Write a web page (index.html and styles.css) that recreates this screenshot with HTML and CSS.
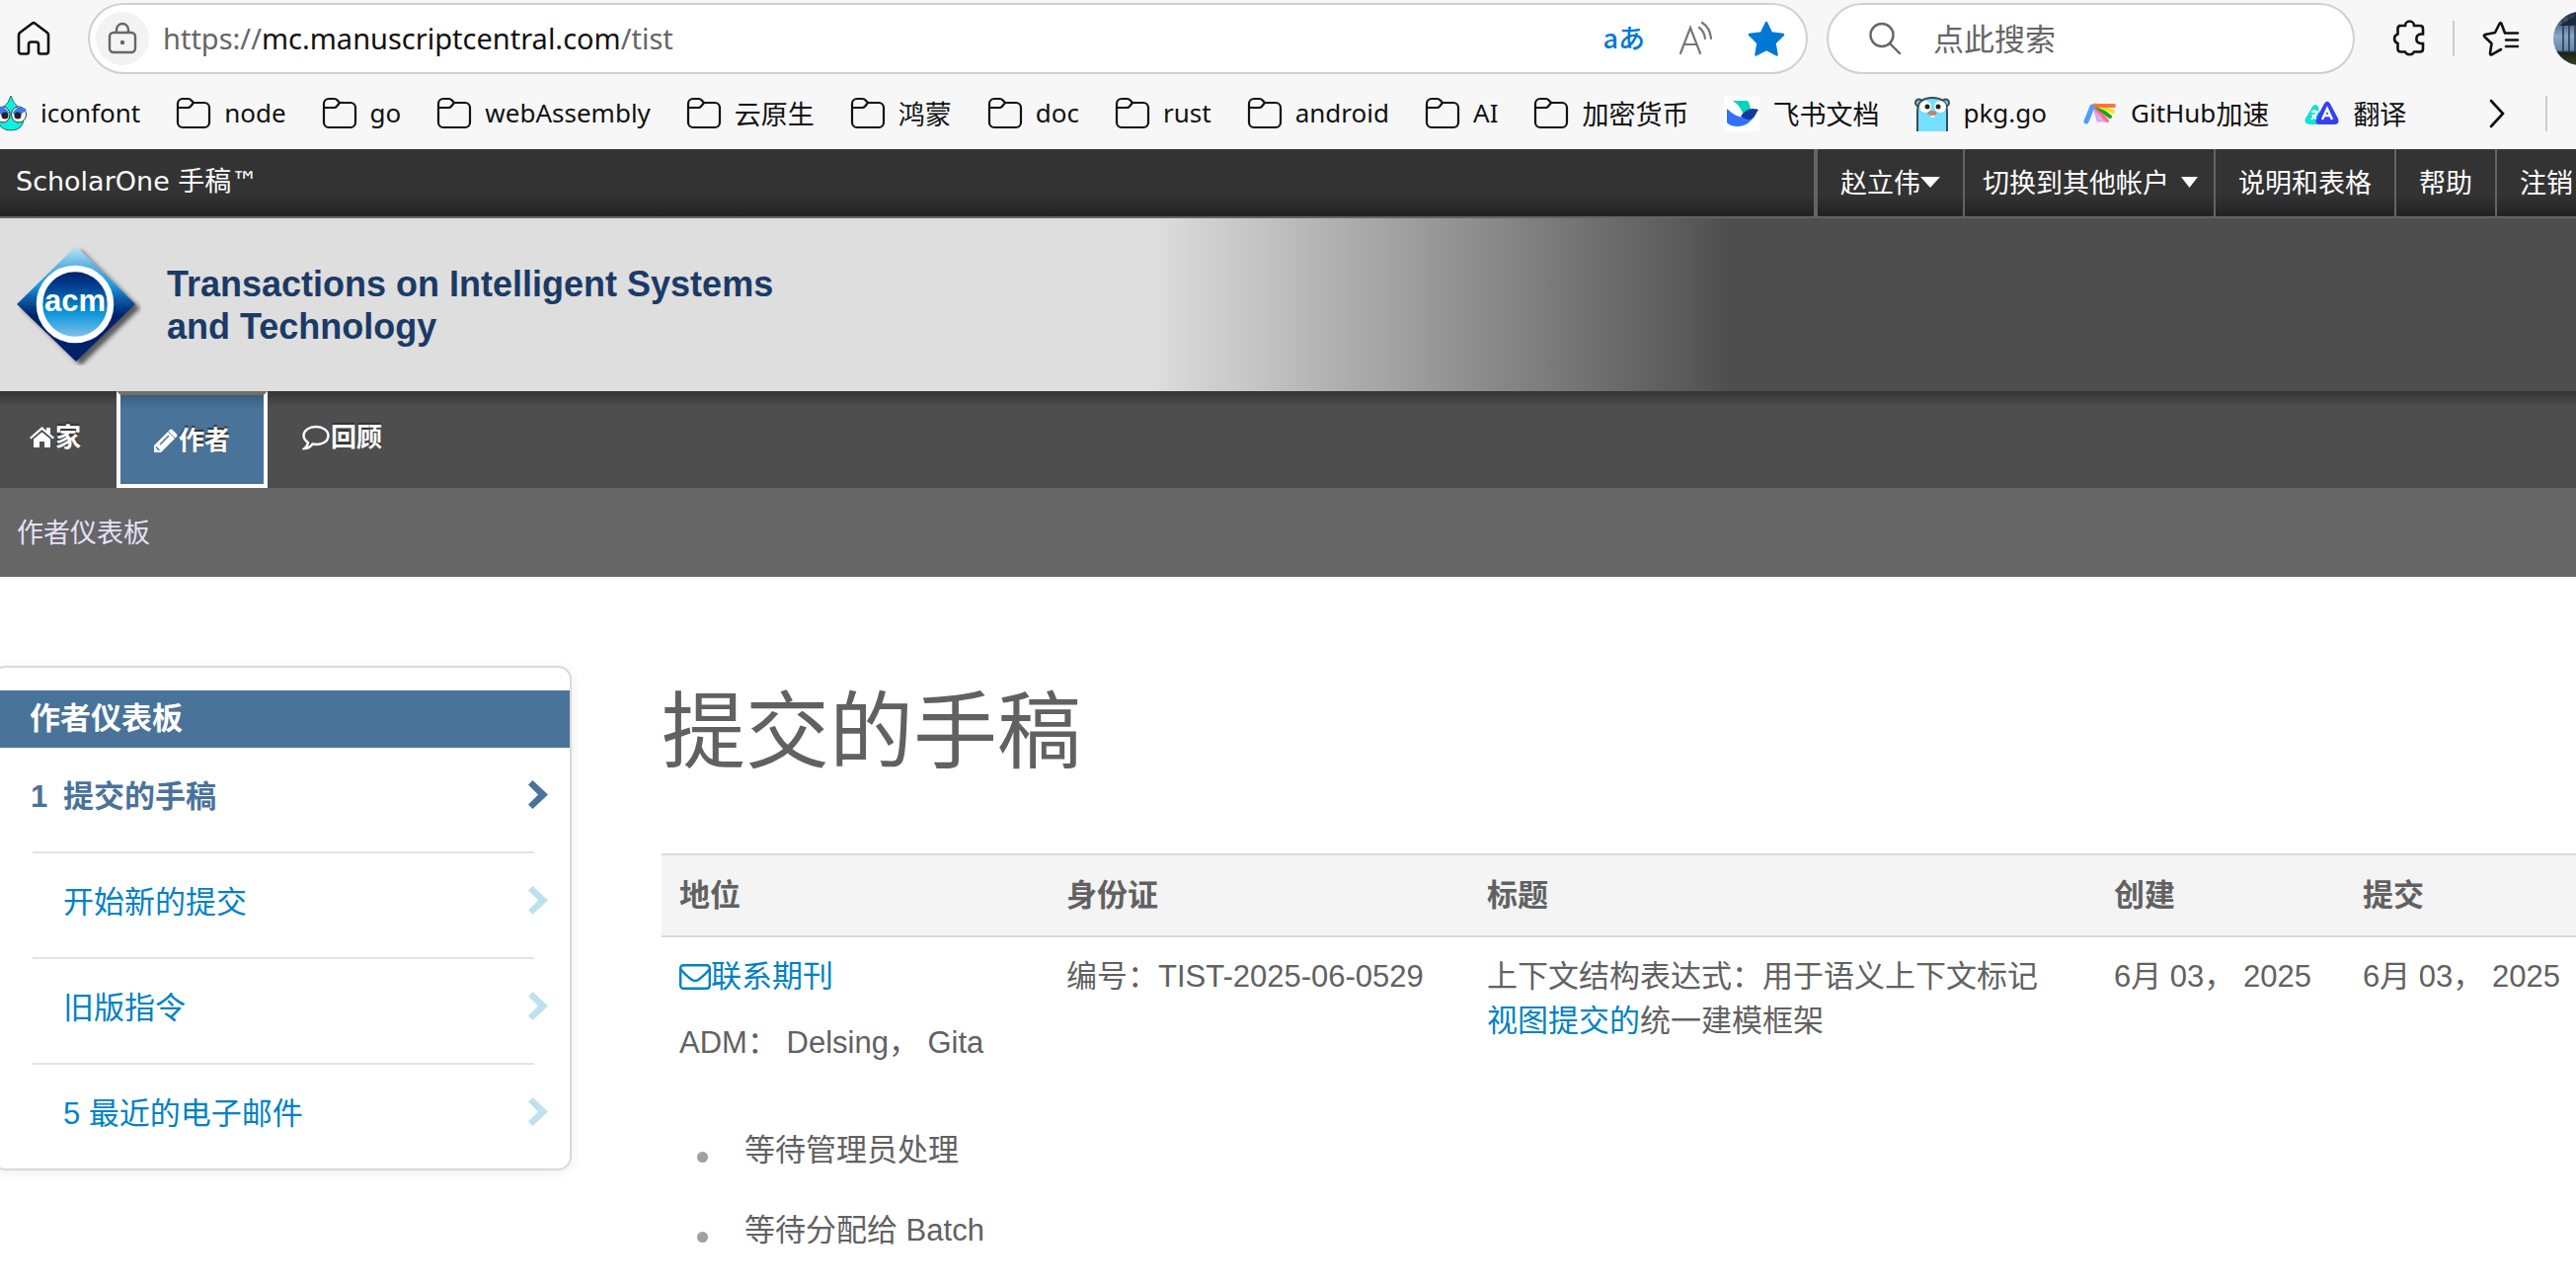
FILE: index.html
```html
<!DOCTYPE html>
<html lang="zh-CN">
<head>
<meta charset="utf-8">
<title>ScholarOne 手稿</title>
<link rel="stylesheet" href="styles.css">
</head>
<body>
<svg class="defs" aria-hidden="true">
  <symbol id="folder" viewBox="0 0 36 36">
    <path d="M2 8a5 5 0 0 1 5-5h5.500q2 0 3.200 1.500L18 7h11a5 5 0 0 1 5 5v15a5 5 0 0 1-5 5H7a5 5 0 0 1-5-5zM2 12h10.500q1.500 0 2.500-1.200L18 7" fill="none" stroke="#111" stroke-width="2.200"/>
  </symbol>
  <symbol id="chevron" viewBox="0 0 20 29">
    <path d="M0 4.500 4.500 0 20 14.500 4.500 29 0 24.500l10-10z" fill="currentColor"/>
  </symbol>
</svg>

<header class="browser">
  <div class="toolbar">
    <button class="icon-btn home" aria-label="主页">
      <svg width="34" height="36" viewBox="0 0 34 36"><path d="M2 14.500Q2 13 3.200 12L15.500 2.800q1.500-1.200 3 0L30.800 12Q32 13 32 14.500V31q0 2.500-2.500 2.500H24q-2 0-2-2V24q0-2.500-2.500-2.500h-5Q12 21.500 12 24v7.500q0 2-2 2H4.500Q2 33.500 2 31z" fill="none" stroke="#111" stroke-width="2.600"/></svg>
    </button>
    <div class="address">
      <span class="lock"><svg width="30" height="34" viewBox="0 0 30 34"><rect x="2" y="11" width="26" height="20" rx="4" fill="none" stroke="#666" stroke-width="2.400"/><path d="M9 11V8a6 6 0 0 1 12 0v3" fill="none" stroke="#666" stroke-width="2.400"/><circle cx="15" cy="21" r="2.200" fill="#666"/></svg></span>
      <span class="url">https://<b>mc.manuscriptcentral.com</b>/tist</span>
      <button class="icon-btn translate" aria-label="翻译页面">aあ</button>
      <button class="icon-btn" aria-label="大声朗读">
        <svg width="36" height="36" viewBox="0 0 36 36" fill="none" stroke="#777" stroke-width="2.200" stroke-linecap="round"><path d="M2 33 12 7l10 26M5.500 24h13M21 7q5 3.500 6 11M24 2q8 5 9 16"/></svg>
      </button>
      <button class="icon-btn" aria-label="收藏">
        <svg width="38" height="36" viewBox="0 0 38 36"><path d="M19 2l5 10.500 12 1.500-8.500 8.500 2 12L19 29 8.500 34.500l2-12L2 14l12-1.500z" fill="#0078d4" stroke="#0078d4" stroke-width="2.500" stroke-linejoin="round"/></svg>
      </button>
    </div>
    <label class="search">
      <svg width="34" height="34" viewBox="0 0 34 34" fill="none" stroke="#666" stroke-width="2.400"><circle cx="14" cy="13.500" r="11.500"/><path d="M22 22l10 10" stroke-linecap="round"/></svg>
      <input type="text" placeholder="点此搜索" aria-label="点此搜索">
    </label>
    <button class="icon-btn ext" aria-label="扩展">
      <svg width="34" height="38" viewBox="0 0 34 38"><path d="M7 6h7a4.500 4.500 0 0 1 9 0h6q3 0 3 3v5.500h-2.500a4.800 4.800 0 0 0 0 9.500H32v5.500q0 3-3 3h-6a5 5 0 0 1-9 0H9.500q-3 0-3-3V24a5 5 0 0 1 0-9.500V9q0-3 3-3z" fill="none" stroke="#111" stroke-width="2.600"/></svg>
    </button>
    <span class="rule"></span>
    <button class="icon-btn favs" aria-label="收藏夹">
      <svg width="38" height="38" viewBox="0 0 38 38" fill="none" stroke="#111" stroke-width="2.600" stroke-linecap="round" stroke-linejoin="round"><path d="M36 13.500H23L19.500 4q-1-1.800-2 0L13 13 3 15q-2 .800-.500 2.200L9.500 24 8 34q.200 2 2 1.200l9-5.200M24 20.500h12M24 27h12"/></svg>
    </button>
    <svg class="avatar" width="54" height="54" viewBox="0 0 54 54"><defs><clipPath id="face"><circle cx="27" cy="27" r="27"/></clipPath><linearGradient id="sky" x1="0" y1="0" x2="0" y2="1"><stop offset="0" stop-color="#1c2c3e"/><stop offset=".45" stop-color="#8aa6cc"/><stop offset=".72" stop-color="#6a86a8"/><stop offset=".76" stop-color="#16211b"/><stop offset="1" stop-color="#34481f"/></linearGradient></defs><g clip-path="url(#face)"><path d="M0 0h54v54H0z" fill="url(#sky)"/><path d="M10 8v32M16 4v36M22 0v42M30 0v42" stroke="#22354a" stroke-width="1.500"/><path d="M6 14 22 4l14 8-18 2z" fill="#1a2a38"/></g></svg>
  </div>
  <nav class="bookmarks">
    <ul>
      <li><a href="#" class="latin"><svg width="36" height="36" viewBox="0 0 36 36"><path d="M19 0q-2 7-7 11-6 3-6 11 0 13 13 13t13-13q0-8-6-11-5-4-7-11z" fill="#0ff0e0" stroke="#186f78"/><ellipse cx="11" cy="19" rx="7" ry="8" fill="#fff" stroke="#333"/><ellipse cx="27" cy="19" rx="7.500" ry="8" fill="#fff" stroke="#333"/><path d="M3 14q8-6 14 3-2 5-7 3zM35 14q-8-6-14 3 2 5 7 3z" fill="#3a7bf0"/><circle cx="13" cy="20" r="3.500" fill="#222"/><circle cx="26" cy="20" r="3.500" fill="#222"/></svg>iconfont</a></li>
      <li><a href="#" class="latin"><svg width="36" height="36"><use href="#folder"/></svg>node</a></li>
      <li><a href="#" class="latin"><svg width="36" height="36"><use href="#folder"/></svg>go</a></li>
      <li><a href="#" class="latin"><svg width="36" height="36"><use href="#folder"/></svg>webAssembly</a></li>
      <li><a href="#"><svg width="36" height="36"><use href="#folder"/></svg>云原生</a></li>
      <li><a href="#"><svg width="36" height="36"><use href="#folder"/></svg>鸿蒙</a></li>
      <li><a href="#" class="latin"><svg width="36" height="36"><use href="#folder"/></svg>doc</a></li>
      <li><a href="#" class="latin"><svg width="36" height="36"><use href="#folder"/></svg>rust</a></li>
      <li><a href="#" class="latin"><svg width="36" height="36"><use href="#folder"/></svg>android</a></li>
      <li><a href="#" class="latin"><svg width="36" height="36"><use href="#folder"/></svg>AI</a></li>
      <li><a href="#"><svg width="36" height="36"><use href="#folder"/></svg>加密货币</a></li>
      <li><a href="#"><svg width="36" height="36" viewBox="0 0 36 36"><rect width="36" height="36" rx="4" fill="#fff"/><path d="M9 5h15q3 4 3 9l-7 6Q17 10 9 5z" fill="#00d6b9"/><path d="M3 13q9 9 19 9l7 1q-6 8-15 8-8 0-11-4z" fill="#3370ff"/><path d="M17 21q5-8 12-8 4 0 6 1-2 3-4 7-4 6-14 0z" fill="#133c9a"/></svg>飞书文档</a></li>
      <li><a href="#" class="latin"><svg width="36" height="36" viewBox="0 0 36 36"><circle cx="4.500" cy="7" r="3.500" fill="#74ceea" stroke="#394d54" stroke-width="2"/><circle cx="31.500" cy="7" r="3.500" fill="#74ceea" stroke="#394d54" stroke-width="2"/><path d="M3 37V16Q3 2 18 2t15 14v21z" fill="#75dfff" stroke="#394d54" stroke-width="2"/><circle cx="11" cy="11" r="6" fill="#fff"/><circle cx="26" cy="11" r="6" fill="#fff"/><circle cx="13" cy="11" r="2.500" fill="#222"/><circle cx="24" cy="11" r="2.500" fill="#222"/><rect x="16.500" y="18" width="4" height="4" rx="1" fill="#fff"/><ellipse cx="18" cy="17.500" rx="4.500" ry="2.500" fill="#c08468"/></svg>pkg.go</a></li>
      <li><a href="#"><svg width="36" height="36" viewBox="0 0 36 36" stroke-linecap="round" fill="none"><path d="M12 12l4 13h8z" fill="#e9b9f5" stroke="#d8a6f0" stroke-width="3"/><path d="M13 12l12 13" stroke="#ff6d9c" stroke-width="4"/><path d="M13 10l15 11" stroke="#12a818" stroke-width="4"/><path d="M13 9l18 7" stroke="#ffe11a" stroke-width="4"/><path d="M12 10h20" stroke="#ff7143" stroke-width="4"/><path d="M10 11 4 26" stroke="#4d9dff" stroke-width="5"/></svg><span class="latin">GitHub</span>加速</a></li>
      <li><a href="#"><svg width="36" height="36" viewBox="0 0 36 36"><path d="M8 11q3-4 6 0l3 18H6q-7 0-5-6z" fill="#0fe3d2"/><path d="M7 16h7m-4-2v2m3 0q-2 5-6 8m1-5q2 4 6 5" stroke="#fff" stroke-width="2" fill="none"/><path d="M20 8q3-5 6 0l8 15q2 6-4 6H16q-6 0-4-6z" fill="#3340f5"/><path d="M18 24l5-11 5 11m-8-4h6" fill="none" stroke="#fff" stroke-width="2.400"/></svg>翻译</a></li>
    </ul>
    <button class="icon-btn more" aria-label="更多">
      <svg width="16" height="30" viewBox="0 0 16 30"><path d="M2 2l12 13L2 28" fill="none" stroke="#111" stroke-width="2.600" stroke-linecap="round"/></svg>
    </button>
    <span class="rule"></span>
  </nav>
</header>

<div class="topbar">
  <span class="brand">ScholarOne 手稿™</span>
  <ul class="account">
    <li><button>赵立伟<svg width="20" height="11"><path d="M0 0h20L10 11z" fill="#fff"/></svg></button></li>
    <li><button class="switch">切换到其他帐户<svg width="17" height="11"><path d="M0 0h17L8.500 11z" fill="#fff"/></svg></button></li>
    <li><a href="#">说明和表格</a></li>
    <li><a href="#">帮助</a></li>
    <li><a href="#" class="logout">注销</a></li>
  </ul>
</div>

<div class="banner">
  <svg width="126" height="122" viewBox="0 0 126 122" role="img" aria-label="acm">
    <defs>
      <linearGradient id="gem" x1="0" y1="0" x2="0" y2="1"><stop offset="0" stop-color="#c4e4f5"/><stop offset=".17" stop-color="#5fb4e4"/><stop offset=".34" stop-color="#1c9bdc"/><stop offset=".46" stop-color="#0a5ba6"/><stop offset=".6" stop-color="#00246a"/><stop offset="1" stop-color="#00246a"/></linearGradient>
      <linearGradient id="disc" x1="0" y1="0" x2="0" y2="1"><stop offset="0" stop-color="#001a63"/><stop offset=".3" stop-color="#03499a"/><stop offset=".6" stop-color="#0393d8"/><stop offset=".8" stop-color="#48abe4"/><stop offset="1" stop-color="#8cc8ea"/></linearGradient>
      <filter id="shade" x="-20%" y="-20%" width="140%" height="140%"><feDropShadow dx="5" dy="4" stdDeviation="2" flood-color="#222" flood-opacity=".7"/></filter>
    </defs>
    <path d="M60 1l60 59-60 58L0 60z" fill="url(#gem)" filter="url(#shade)"/>
    <circle cx="59" cy="60" r="36" fill="url(#disc)" stroke="#fff" stroke-width="6.500"/>
    <text x="59" y="67" text-anchor="middle" class="acm">acm</text>
  </svg>
  <p>Transactions on Intelligent Systems<br>and Technology</p>
</div>

<nav class="mainnav">
  <a href="#" class="home-tab"><svg width="25" height="22" viewBox="0 0 25 22" fill="#fff"><path d="M0 11 12.500 0 17 4V1h4v6.500L25 11l-1.500 1.500-11-9.500-11 9.500z"/><path d="M4 12.500 12.500 5.500l8.500 7V21h-6v-6h-5v6H4z"/></svg>家</a>
  <a href="#" class="current"><svg width="24" height="24" viewBox="0 0 24 24"><path d="M0 24v-7L14 3l7 7L7 24zM15.500 1.500q1.500-2 3.500 0l3.500 3.500q2 2 0 3.500L21.500 9.500l-7-7z" fill="#fff"/><path d="M2 18.500 5.500 22M6 16l9-9" stroke="#4a739a" stroke-width="1.500"/></svg>作者</a>
  <a href="#" class="review"><svg width="28" height="26" viewBox="0 0 28 26"><path d="M14 2C7 2 1.500 6 1.500 11q0 4 4.500 7-.500 3.500-3.500 6 5 0 8-4.500c10 2 16-3 16-8.500 0-5-5.500-9-12.500-9z" fill="none" stroke="#fff" stroke-width="2.400"/></svg>回顾</a>
</nav>
<div class="subnav"><a href="#">作者仪表板</a></div>

<div class="page">
  <aside class="card">
    <h2>作者仪表板</h2>
    <ul>
      <li class="active"><a href="#"><span class="count">1</span>提交的手稿<svg width="20" height="29"><use href="#chevron"/></svg></a></li>
      <li><a href="#">开始新的提交<svg width="20" height="29"><use href="#chevron"/></svg></a></li>
      <li><a href="#">旧版指令<svg width="20" height="29"><use href="#chevron"/></svg></a></li>
      <li><a href="#">5 最近的电子邮件<svg width="20" height="29"><use href="#chevron"/></svg></a></li>
    </ul>
  </aside>
  <main>
    <h1>提交的手稿</h1>
    <table>
      <thead>
        <tr><th class="c-status">地位</th><th class="c-id">身份证</th><th>标题</th><th class="c-created">创建</th><th class="c-submitted">提交</th></tr>
      </thead>
      <tbody>
        <tr>
          <td>
            <a href="#" class="contact"><svg width="32" height="26" viewBox="0 0 32 26" fill="none" stroke="currentColor" stroke-width="2.400"><rect x="1.200" y="1.200" width="29.600" height="23.600" rx="3"/><path d="M1 5q5 6 11 10.500 4 3 8 0Q26 11 31 5"/></svg>联系期刊</a>
            <p>ADM： Delsing， Gita</p>
            <ul>
              <li>等待管理员处理</li>
              <li>等待分配给 Batch</li>
            </ul>
          </td>
          <td>编号：TIST-2025-06-0529</td>
          <td>上下文结构表达式：用于语义上下文标记<br><a href="#">视图提交的</a>统一建模框架</td>
          <td>6月 03， 2025</td>
          <td>6月 03， 2025</td>
        </tr>
      </tbody>
    </table>
  </main>
</div>
</body>
</html>
```
FILE: styles.css
```css
* { box-sizing: border-box; }

body {
  margin: 0;
  overflow-x: hidden;
  background: #fff;
  color: #616161;
  font-family: "Liberation Sans", "Noto Sans CJK SC", sans-serif;
  font-size: 31px;
  line-height: 45px;
}

h1, h2, p, ul { margin: 0; padding: 0; }
ul { list-style: none; }
a { color: #0082c3; text-decoration: none; }
button, input { font: inherit; color: inherit; }
button { margin: 0; padding: 0; border: 0; background: none; }
svg { flex: none; display: block; }
.defs { position: absolute; width: 0; height: 0; }
.latin { font-family: "Noto Sans", sans-serif; font-size: 26px; }

/* Browser chrome */
.browser {
  background: #f7f7f7;
  color: #111;
  font-family: "Noto Sans CJK SC", sans-serif;
  overflow: hidden;
}
.toolbar {
  display: flex;
  align-items: center;
  height: 78px;
  padding-left: 17px;
}
.icon-btn { flex: none; display: block; }
.address {
  flex: 1;
  display: flex;
  align-items: center;
  gap: 34px;
  height: 72px;
  margin-left: 38px;
  padding: 0 21px 0 6px;
  border: 2px solid #d0d0d0;
  border-radius: 36px;
  background: #fff;
}
.lock {
  display: grid;
  place-items: center;
  width: 54px;
  height: 54px;
  margin-right: -20px;
  border-radius: 50%;
  background: #f3f3f3;
}
.url {
  flex: 1;
  padding-bottom: 2px;
  color: #666;
  font-family: "Noto Sans", sans-serif;
  font-size: 29px;
}
.url b { color: #111; font-weight: 400; }
.translate {
  padding-bottom: 4px;
  color: #0078d4;
  font-size: 27px;
  font-weight: 500;
}
.search {
  display: flex;
  align-items: center;
  gap: 32px;
  width: 535px;
  height: 72px;
  margin-left: 19px;
  padding: 0 40px;
  border: 2px solid #d0d0d0;
  border-radius: 36px;
  background: #fff;
}
.search input {
  flex: 1;
  min-width: 0;
  padding: 0 0 4px;
  border: 0;
  outline: 0;
  background: none;
}
.search input::placeholder { color: #666; opacity: 1; }
.ext { margin-left: 37px; }
.rule { flex: none; width: 2px; height: 36px; background: #ccc; }
.toolbar .rule { margin-left: 28px; }
.favs { margin-left: 28px; }
.avatar { margin: 0 -31px 0 34px; }

.bookmarks {
  display: flex;
  align-items: center;
  height: 73px;
  padding-right: 29px;
  font-size: 27px;
}
.bookmarks ul {
  flex: 1;
  display: flex;
  gap: 36px;
  min-width: 0;
  margin-left: -8px;
}
.bookmarks a {
  display: flex;
  align-items: center;
  color: #111;
  white-space: nowrap;
}
.bookmarks a svg { margin-right: 13px; }
.more { margin-right: 41px; }

/* Site top bar */
.topbar {
  display: flex;
  justify-content: space-between;
  height: 70px;
  border-bottom: 2px solid #646464;
  background: linear-gradient(#333 68%, #222);
  color: #fff;
  font-family: "Noto Sans CJK SC", sans-serif;
  font-size: 27px;
  line-height: 66px;
}
.brand {
  padding-left: 16px;
  font-family: "DejaVu Sans", "Noto Sans CJK SC", sans-serif;
}
.account { display: flex; }
.account li { border-left: 2px solid #646464; }
.account li:first-child { border-left-width: 4px; }
.account a, .account button {
  display: flex;
  align-items: center;
  padding: 0 23px;
  color: #fff;
}
.account .switch { gap: 12px; padding: 0 16px 0 18px; }
.account .logout { padding-right: 3px; }

/* Journal banner */
.banner {
  display: flex;
  align-items: center;
  gap: 26px;
  height: 175px;
  padding-left: 17px;
  background: linear-gradient(90deg, #dedede 44.7%, #4e4e4e 67.2%);
}
.banner p {
  color: #1b3a66;
  font-size: 36px;
  font-weight: 700;
  line-height: 43px;
}
.acm { fill: #fff; font-size: 31px; font-weight: 700; }

/* Navigation */
.mainnav {
  display: flex;
  height: 98px;
  background: linear-gradient(#363636, #4e4e4e 16px);
  font-size: 26px;
  font-weight: 700;
}
.mainnav a {
  display: flex;
  align-items: center;
  padding-bottom: 4px;
  color: #fff;
  text-shadow: 0 -2px 1px #333;
}
.mainnav svg { margin-right: 1px; }
.mainnav .home-tab { padding-left: 30px; padding-right: 36px; }
.mainnav .current {
  padding: 2px 34px 0;
  border: 4px solid #fff;
  border-top-color: #707070;
  background: linear-gradient(#3c5d7c, #4a739a 14px);
}
.mainnav .review { padding-left: 35px; }
.subnav { height: 90px; padding-left: 17px; background: #666; }
.subnav a { color: #e6e0fa; font-size: 27px; line-height: 93px; }

/* Page body */
.page {
  display: flex;
  align-items: flex-start;
  gap: 91px;
  margin-left: -8px;
  padding-top: 90px;
}
.card {
  flex: none;
  width: 587px;
  padding-top: 23px;
  border: 2px solid #d9d9d9;
  border-radius: 14px;
  box-shadow: 0 2px 12px rgba(0, 0, 0, .08);
}
.card h2 {
  padding-left: 36px;
  background: #4a739a;
  color: #fff;
  font-size: 31px;
  line-height: 58px;
}
.card ul { padding: 0 36px 0 39px; }
.card li + li { border-top: 2px solid #e3e3e3; }
.card a {
  display: flex;
  align-items: center;
  height: 105px;
  margin-right: -14px;
  padding: 0 0 6px 31px;
}
.card a svg { margin: 0 0 4px auto; color: #bfe1ef; }
.card .active a { margin-left: -2px; padding-left: 0; color: #4a739a; font-weight: 700; }
.card .active svg { color: #4a739a; }
.count { width: 33px; }

main { flex: 1; min-width: 0; }
h1 {
  font-size: 85px;
  font-weight: 400;
  line-height: 136px;
  margin-bottom: 54px;
}
table {
  width: 100%;
  border-collapse: collapse;
  table-layout: fixed;
}
th, td { padding: 17px 0 0 18px; text-align: left; vertical-align: top; white-space: nowrap; }
th {
  height: 83px;
  padding: 0 0 0 18px;
  border: solid #d9d9d9;
  border-width: 2px 0;
  background: #f4f4f4;
  vertical-align: middle;
}
.c-status { width: 392px; }
.c-id { width: 426px; }
.c-created { width: 252px; }
.c-submitted { width: 234px; }
.contact { display: flex; align-items: center; }
td p { margin: 22px 0 64px; }
td li { display: flex; align-items: center; margin-bottom: 36px; }
td li::before {
  content: "";
  width: 11px;
  height: 11px;
  margin: 14px 37px 0 18px;
  border-radius: 50%;
  background: #a0a0a0;
}
```
